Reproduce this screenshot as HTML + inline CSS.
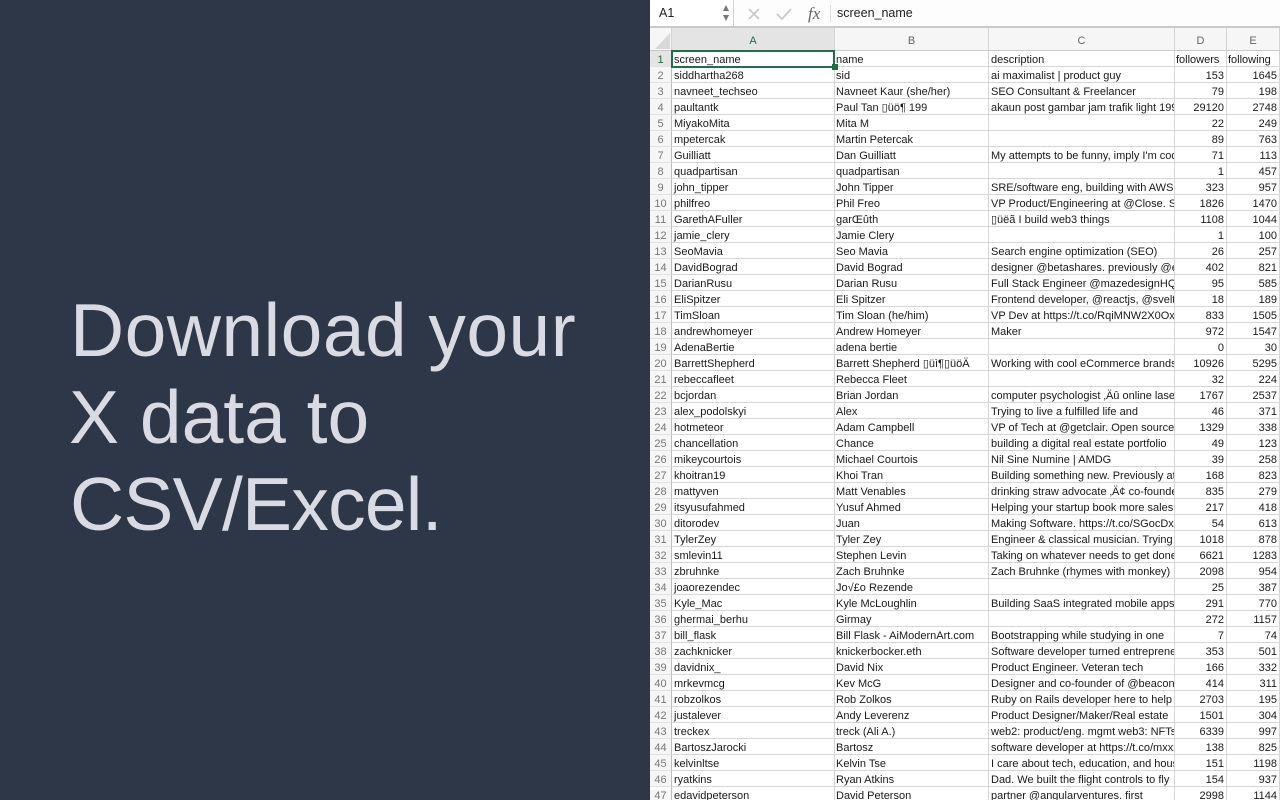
<!DOCTYPE html>
<html><head><meta charset="utf-8"><style>
*{box-sizing:border-box}
html,body{margin:0;padding:0;width:1280px;height:800px;overflow:hidden;background:#fff}
body{position:relative;font-family:"Liberation Sans",sans-serif}
#l{position:absolute;left:0;top:0;width:650px;height:800px;background:#2d3748}
#l div{position:absolute;left:70px;font-size:75px;line-height:87px;color:#d8dbe3;white-space:nowrap}
#wrap{position:absolute;left:650px;top:0;width:630px;height:800px;overflow:hidden}
#bar{position:absolute;left:0;top:0;width:630px;height:28px;background:#fdfdfd;border-bottom:2px solid #c9c9c9}
#nb{position:absolute;left:0;top:0;width:84px;height:26px;background:#fff;border-right:1px solid #d2d2d2;font-size:12.5px;line-height:27px;padding-left:9px;color:#222}
#ft{position:absolute;left:187px;top:0;font-size:12.5px;line-height:27px;color:#222}
#fx{position:absolute;left:158px;top:1px;font:italic 17px/25px "Liberation Serif",serif;color:#666}
#sep{position:absolute;left:180px;top:5px;width:1px;height:17px;background:#ddd}
#hd{position:absolute;left:0;top:28px;width:630px;height:23px;background:#f6f6f6;border-bottom:1px solid #c8c8c8}
#hd span{position:absolute;top:0;height:22px;border-right:1px solid #d4d4d4;font-size:11px;line-height:27px;text-align:center;color:#666}
table{position:absolute;left:0;top:51px;border-collapse:separate;border-spacing:0;table-layout:fixed;width:630px;font-size:11px;color:#1a1a1a}
tr{height:16px}
td{height:16px;padding:3px 0 0 2px;border-right:1px solid #d6d6d6;border-bottom:1px solid #d6d6d6;overflow:hidden;white-space:nowrap;line-height:12px}
td:first-child{background:#f6f6f6;color:#777;text-align:center;padding:3px 0 0 0;border-right:1px solid #bdbdbd;border-bottom:1px solid #e2e2e2;font-size:11px}
td:nth-child(3){padding-left:1px}
td:nth-child(5),td:nth-child(6){text-align:right;padding:3px 2px 0 0}
tr:first-child td:nth-child(5),tr:first-child td:nth-child(6){text-align:left;padding-left:1px}
tr:first-child td:first-child{color:#1d7044;background:#e4e4e4}
#sel{position:absolute;left:671px;top:50px;width:164px;height:18px;border:2px solid #1d7044}
#hdl{position:absolute;left:832px;top:64px;width:6px;height:6px;background:#1d7044}
</style></head><body>
<div id="l"><div style="top:287px;letter-spacing:.45px">Download your</div><div style="top:374px;left:69px">X data to</div><div style="top:461px;letter-spacing:-.75px">CSV/Excel.</div></div>
<div id="wrap">
<div id="bar">
<div id="nb">A1</div>
<svg style="position:absolute;left:0;top:0" width="180" height="25">
<path d="M73 11l3-6 3 6z M73 15l3 6 3-6z" fill="#777"/>
<path d="M99 9l10 10M109 9l-10 10" stroke="#c9c9c9" stroke-width="1.800" fill="none"/>
<path d="M127 14l5 5 9-10" stroke="#c9c9c9" stroke-width="1.800" fill="none"/>
</svg>
<div id="fx">fx</div><div id="sep"></div><div id="ft">screen_name</div>
</div>
<div id="hd">
<svg style="position:absolute;left:0;top:0" width="22" height="22"><path d="M20 5v16H5z" fill="#d8d8d8"/></svg>
<span style="left:0;width:22px"></span>
<span style="left:22px;width:163px;background:#e4e4e4;color:#1d7044">A</span>
<span style="left:185px;width:154px">B</span>
<span style="left:339px;width:186px">C</span>
<span style="left:525px;width:52px">D</span>
<span style="left:577px;width:53px">E</span>
</div>
<table><colgroup><col style="width:22px"><col style="width:163px"><col style="width:154px"><col style="width:186px"><col style="width:52px"><col style="width:53px"></colgroup>
<tr><td>1</td><td>screen_name</td><td>name</td><td>description</td><td>followers</td><td>following</td></tr>
<tr><td>2</td><td>siddhartha268</td><td>sid</td><td>ai maximalist | product guy</td><td>153</td><td>1645</td></tr>
<tr><td>3</td><td>navneet_techseo</td><td>Navneet Kaur (she/her)</td><td>SEO Consultant &amp; Freelancer</td><td>79</td><td>198</td></tr>
<tr><td>4</td><td>paultantk</td><td>Paul Tan ▯üö¶ 199</td><td>akaun post gambar jam trafik light 199</td><td>29120</td><td>2748</td></tr>
<tr><td>5</td><td>MiyakoMita</td><td>Mita M</td><td></td><td>22</td><td>249</td></tr>
<tr><td>6</td><td>mpetercak</td><td>Martin Petercak</td><td></td><td>89</td><td>763</td></tr>
<tr><td>7</td><td>Guilliatt</td><td>Dan Guilliatt</td><td>My attempts to be funny, imply I'm cool</td><td>71</td><td>113</td></tr>
<tr><td>8</td><td>quadpartisan</td><td>quadpartisan</td><td></td><td>1</td><td>457</td></tr>
<tr><td>9</td><td>john_tipper</td><td>John Tipper</td><td>SRE/software eng, building with AWS and</td><td>323</td><td>957</td></tr>
<tr><td>10</td><td>philfreo</td><td>Phil Freo</td><td>VP Product/Engineering at @Close. Since</td><td>1826</td><td>1470</td></tr>
<tr><td>11</td><td>GarethAFuller</td><td>garŒûth</td><td>▯üëã I build web3 things</td><td>1108</td><td>1044</td></tr>
<tr><td>12</td><td>jamie_clery</td><td>Jamie Clery</td><td></td><td>1</td><td>100</td></tr>
<tr><td>13</td><td>SeoMavia</td><td>Seo Mavia</td><td>Search engine optimization (SEO)</td><td>26</td><td>257</td></tr>
<tr><td>14</td><td>DavidBograd</td><td>David Bograd</td><td>designer @betashares. previously @eth</td><td>402</td><td>821</td></tr>
<tr><td>15</td><td>DarianRusu</td><td>Darian Rusu</td><td>Full Stack Engineer @mazedesignHQ and</td><td>95</td><td>585</td></tr>
<tr><td>16</td><td>EliSpitzer</td><td>Eli Spitzer</td><td>Frontend developer, @reactjs, @svelte</td><td>18</td><td>189</td></tr>
<tr><td>17</td><td>TimSloan</td><td>Tim Sloan (he/him)</td><td>VP Dev at https://t.co/RqiMNW2X0Oxx</td><td>833</td><td>1505</td></tr>
<tr><td>18</td><td>andrewhomeyer</td><td>Andrew Homeyer</td><td>Maker</td><td>972</td><td>1547</td></tr>
<tr><td>19</td><td>AdenaBertie</td><td>adena bertie</td><td></td><td>0</td><td>30</td></tr>
<tr><td>20</td><td>BarrettShepherd</td><td>Barrett Shepherd ▯üì¶▯üöÄ</td><td>Working with cool eCommerce brands</td><td>10926</td><td>5295</td></tr>
<tr><td>21</td><td>rebeccafleet</td><td>Rebecca Fleet</td><td></td><td>32</td><td>224</td></tr>
<tr><td>22</td><td>bcjordan</td><td>Brian Jordan</td><td>computer psychologist ‚Äû online laser</td><td>1767</td><td>2537</td></tr>
<tr><td>23</td><td>alex_podolskyi</td><td>Alex</td><td>Trying to live a fulfilled life and</td><td>46</td><td>371</td></tr>
<tr><td>24</td><td>hotmeteor</td><td>Adam Campbell</td><td>VP of Tech at @getclair. Open source</td><td>1329</td><td>338</td></tr>
<tr><td>25</td><td>chancellation</td><td>Chance</td><td>building a digital real estate portfolio</td><td>49</td><td>123</td></tr>
<tr><td>26</td><td>mikeycourtois</td><td>Michael Courtois</td><td>Nil Sine Numine | AMDG</td><td>39</td><td>258</td></tr>
<tr><td>27</td><td>khoitran19</td><td>Khoi Tran</td><td>Building something new. Previously at</td><td>168</td><td>823</td></tr>
<tr><td>28</td><td>mattyven</td><td>Matt Venables</td><td>drinking straw advocate ‚Ä¢ co-founder</td><td>835</td><td>279</td></tr>
<tr><td>29</td><td>itsyusufahmed</td><td>Yusuf Ahmed</td><td>Helping your startup book more sales</td><td>217</td><td>418</td></tr>
<tr><td>30</td><td>ditorodev</td><td>Juan</td><td>Making Software. https://t.co/SGocDxx</td><td>54</td><td>613</td></tr>
<tr><td>31</td><td>TylerZey</td><td>Tyler Zey</td><td>Engineer &amp; classical musician. Trying to</td><td>1018</td><td>878</td></tr>
<tr><td>32</td><td>smlevin11</td><td>Stephen Levin</td><td>Taking on whatever needs to get done</td><td>6621</td><td>1283</td></tr>
<tr><td>33</td><td>zbruhnke</td><td>Zach Bruhnke</td><td>Zach Bruhnke (rhymes with monkey)</td><td>2098</td><td>954</td></tr>
<tr><td>34</td><td>joaorezendec</td><td>Jo√£o Rezende</td><td></td><td>25</td><td>387</td></tr>
<tr><td>35</td><td>Kyle_Mac</td><td>Kyle McLoughlin</td><td>Building SaaS integrated mobile apps</td><td>291</td><td>770</td></tr>
<tr><td>36</td><td>ghermai_berhu</td><td>Girmay</td><td></td><td>272</td><td>1157</td></tr>
<tr><td>37</td><td>bill_flask</td><td>Bill Flask - AiModernArt.com</td><td>Bootstrapping while studying in one</td><td>7</td><td>74</td></tr>
<tr><td>38</td><td>zachknicker</td><td>knickerbocker.eth</td><td>Software developer turned entrepreneur</td><td>353</td><td>501</td></tr>
<tr><td>39</td><td>davidnix_</td><td>David Nix</td><td>Product Engineer.  Veteran tech</td><td>166</td><td>332</td></tr>
<tr><td>40</td><td>mrkevmcg</td><td>Kev McG</td><td>Designer and co-founder of @beacon</td><td>414</td><td>311</td></tr>
<tr><td>41</td><td>robzolkos</td><td>Rob Zolkos</td><td>Ruby on Rails developer here to help</td><td>2703</td><td>195</td></tr>
<tr><td>42</td><td>justalever</td><td>Andy Leverenz</td><td>Product Designer/Maker/Real estate</td><td>1501</td><td>304</td></tr>
<tr><td>43</td><td>treckex</td><td>treck (Ali A.)</td><td>web2: product/eng. mgmt web3: NFTs and</td><td>6339</td><td>997</td></tr>
<tr><td>44</td><td>BartoszJarocki</td><td>Bartosz</td><td>software developer at https://t.co/mxxxx</td><td>138</td><td>825</td></tr>
<tr><td>45</td><td>kelvinltse</td><td>Kelvin Tse</td><td>I care about tech, education, and housing</td><td>151</td><td>1198</td></tr>
<tr><td>46</td><td>ryatkins</td><td>Ryan Atkins</td><td>Dad.  We built the flight controls to fly</td><td>154</td><td>937</td></tr>
</table>
</div>
<div style="position:absolute;left:650px;top:787px;width:630px;height:13px;overflow:hidden;background:#fff;font-size:11px;line-height:12px;color:#1a1a1a;white-space:nowrap">
<span style="position:absolute;left:0;top:3px;width:21px;height:13px;background:#f6f6f6;color:#777;text-align:center;box-sizing:content-box">47</span>
<span style="position:absolute;left:21px;top:0;width:1px;height:13px;background:#bdbdbd"></span>
<span style="position:absolute;left:24px;top:3px">edavidpeterson</span>
<span style="position:absolute;left:186px;top:3px">David Peterson</span>
<span style="position:absolute;left:341px;top:3px">partner @angularventures. first</span>
<span style="position:absolute;left:525px;top:3px;width:51px;text-align:right;padding-right:2px">2998</span>
<span style="position:absolute;left:577px;top:3px;width:52px;text-align:right;padding-right:2px">1144</span>
<span style="position:absolute;left:184px;top:0;width:1px;height:13px;background:#d6d6d6"></span>
<span style="position:absolute;left:338px;top:0;width:1px;height:13px;background:#d6d6d6"></span>
<span style="position:absolute;left:524px;top:0;width:1px;height:13px;background:#d6d6d6"></span>
<span style="position:absolute;left:576px;top:0;width:1px;height:13px;background:#d6d6d6"></span>
<span style="position:absolute;left:629px;top:0;width:1px;height:13px;background:#d6d6d6"></span>
</div>
<div id="sel"></div><div id="hdl"></div>
</body></html>
